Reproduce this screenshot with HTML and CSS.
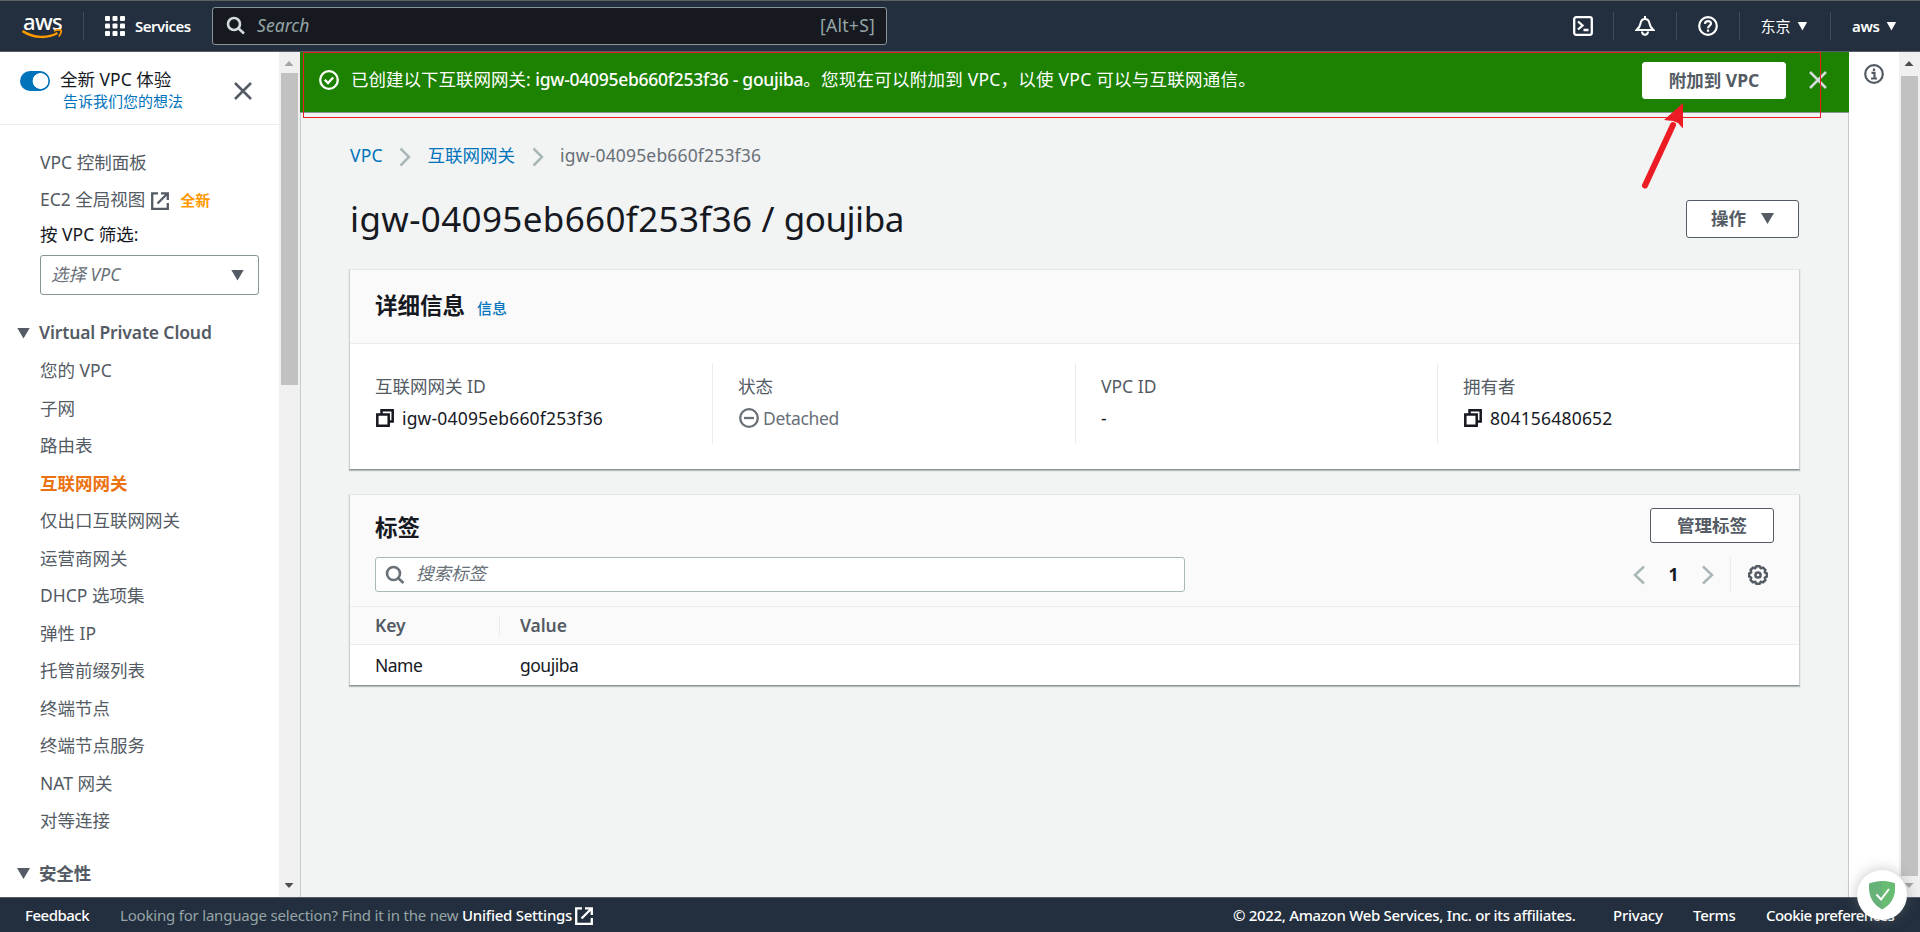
FILE: index.html
```html
<!DOCTYPE html>
<html lang="zh-CN">
<head>
<meta charset="utf-8">
<title>VPC 管理控制台</title>
<link rel="stylesheet" href="styles.css">
</head>
<body>
<header class="topnav">
  <div class="logo"><span>aws</span><svg width="42" height="10" viewBox="0 0 42 10" fill="none" stroke="#ff9900"><path d="M.5 2C12 9.500 26 9.500 35.500 4" stroke-width="2.500"/><path d="M32 1.800C35 .7 38.500 .5 39 1.300C39.500 3 38.500 5.500 36.800 7.500" stroke-width="1.800"/></svg></div>
  <i class="sep sep-logo"></i>
  <a class="services">
    <svg width="20" height="20" viewBox="0 0 20 20" fill="#fff"><rect width="5" height="5" rx="1"/><rect x="7.500" width="5" height="5" rx="1"/><rect x="15" width="5" height="5" rx="1"/><rect y="7.500" width="5" height="5" rx="1"/><rect x="7.500" y="7.500" width="5" height="5" rx="1"/><rect x="15" y="7.500" width="5" height="5" rx="1"/><rect y="15" width="5" height="5" rx="1"/><rect x="7.500" y="15" width="5" height="5" rx="1"/><rect x="15" y="15" width="5" height="5" rx="1"/></svg>
    <span>Services</span>
  </a>
  <div class="topsearch">
    <svg width="20" height="20" viewBox="0 0 20 20" fill="none" stroke="#d5dbdb" stroke-width="2.600"><circle cx="8" cy="8" r="6"/><path d="M12.300 12.300L18 17.500"/></svg>
    <span class="ph">Search</span><span class="key">[Alt+S]</span>
  </div>
  <nav class="tools">
    <svg width="20" height="20" viewBox="0 0 20 20" fill="none" stroke="#fff" stroke-width="2.300"><rect x="1.200" y="1.200" width="17.600" height="17.600" rx="2"/><path d="M5 5.500L9.500 9.500L5 13.500M10.500 14H15.500"/></svg>
    <i class="sep"></i>
    <svg width="20" height="20" viewBox="0 0 20 20" fill="none" stroke="#fff" stroke-width="2"><path d="M1.500 14H18.500C16 12 15 11 14.500 7.500C14 4.500 12.500 3 10 3S6 4.500 5.500 7.500C5 11 4 12 1.500 14ZM10 0V3M7 15.500C7 19.700 13 19.700 13 15.500"/></svg>
    <i class="sep"></i>
    <svg width="20" height="20" viewBox="0 0 20 20" fill="none" stroke="#fff" stroke-width="2.200"><circle cx="10" cy="10" r="8.800"/><path d="M6.900 7.800C7.200 4.200 13 4.300 13 7.600C13 9.800 10 9.500 10 12.300M10 13.500V15.800"/></svg>
    <i class="sep"></i>
    <a class="menu region">东京<b class="tri"></b></a>
    <i class="sep"></i>
    <a class="menu account"><span>aws</span><b class="tri"></b></a>
  </nav>
</header>

<div class="body">
  <aside class="side">
    <div class="side-head">
      <b class="toggle"></b>
      <div class="trial"><span>全新 VPC 体验</span><a>告诉我们您的想法</a></div>
      <svg class="side-close" width="18" height="18" viewBox="0 0 18 18" stroke="#545b64" stroke-width="2.500"><path d="M1 1L17 17M17 1L1 17"/></svg>
    </div>
    <div class="side-top">
      <a>VPC 控制面板</a>
      <a class="ec2">EC2 全局视图<svg width="18" height="18" viewBox="0 0 18 18" fill="none" stroke="#545b64" stroke-width="2.300"><path d="M7 1.300H1.200V16.800H16.800V11M10 1.300H16.800V8M16.500 1.500L6.500 11.500"/></svg><em>全新</em></a>
      <label>按 VPC 筛选:</label>
      <div class="select"><span>选择 VPC</span><b class="tri big"></b></div>
    </div>
    <h3><b class="tri big"></b>Virtual Private Cloud</h3>
    <ul>
      <li>您的 VPC</li><li>子网</li><li>路由表</li><li class="on">互联网网关</li><li>仅出口互联网网关</li><li>运营商网关</li><li>DHCP 选项集</li><li>弹性 IP</li><li>托管前缀列表</li><li>终端节点</li><li>终端节点服务</li><li>NAT 网关</li><li>对等连接</li>
    </ul>
    <h3 class="sec"><b class="tri big"></b>安全性</h3>
  </aside>
  <div class="bar bar-left"><i class="up"></i><div class="thumb"></div><i class="down dark"></i></div>

  <main>
    <div class="flash">
      <svg width="20" height="20" viewBox="0 0 20 20" fill="none" stroke="#fff" stroke-width="2.300"><circle cx="10" cy="10" r="8.800"/><path d="M5.800 9.800L9 13L14.200 7.500"/></svg>
      <p>已创建以下互联网网关: <span class="gw">igw-04095eb660f253f36 - goujiba</span><span class="rest">。您现在可以附加到 VPC，以使 VPC 可以与互联网通信。</span></p>
      <button class="btn attach">附加到 VPC</button>
      <svg class="flash-close" width="18" height="18" viewBox="0 0 18 18" stroke="#d5dbdb" stroke-width="2.500"><path d="M1 1L17 17M17 1L1 17"/></svg>
    </div>
    <div class="content">
      <div class="crumbs">
        <a>VPC</a>
        <svg width="12" height="20" viewBox="0 0 12 20" fill="none" stroke="#aab7b8" stroke-width="2.500"><path d="M1.500 1.500L10 10L1.500 18.500"/></svg>
        <a>互联网网关</a>
        <svg width="12" height="20" viewBox="0 0 12 20" fill="none" stroke="#aab7b8" stroke-width="2.500"><path d="M1.500 1.500L10 10L1.500 18.500"/></svg>
        <span class="id">igw-04095eb660f253f36</span>
      </div>
      <div class="title-row">
        <h1><span class="h-id">igw-04095eb660f253f36</span> / <span class="h-name">goujiba</span></h1>
        <button class="btn actions">操作<b class="tri big"></b></button>
      </div>

      <section class="card">
        <div class="card-head"><h2>详细信息</h2><a>信息</a></div>
        <div class="cols">
          <div class="col"><span>互联网网关 ID</span><p><svg width="18" height="18" viewBox="0 0 18 18" fill="none" stroke="#16191f" stroke-width="2.500"><path d="M1.300 5.500H12.700V16.700H1.300ZM5.500 5V1.300H16.700V12.500H13"/></svg><b class="id">igw-04095eb660f253f36</b></p></div>
          <div class="col"><span>状态</span><p class="muted"><svg width="20" height="20" viewBox="0 0 20 20" fill="none" stroke="#687078" stroke-width="2.300"><circle cx="10" cy="10" r="8.800"/><path d="M5 10H15"/></svg><b class="state">Detached</b></p></div>
          <div class="col"><span>VPC ID</span><p>-</p></div>
          <div class="col"><span>拥有者</span><p><svg width="18" height="18" viewBox="0 0 18 18" fill="none" stroke="#16191f" stroke-width="2.500"><path d="M1.300 5.500H12.700V16.700H1.300ZM5.500 5V1.300H16.700V12.500H13"/></svg><b class="owner">804156480652</b></p></div>
        </div>
      </section>

      <section class="card tags">
        <div class="tags-head">
          <div class="row"><h2>标签</h2><button class="btn manage">管理标签</button></div>
          <div class="row filter">
            <div class="tagsearch"><svg width="20" height="20" viewBox="0 0 20 20" fill="none" stroke="#687078" stroke-width="2.600"><circle cx="8.500" cy="8.500" r="6.500"/><path d="M13 13L18.500 18"/></svg><span>搜索标签</span></div>
            <div class="pager">
              <svg width="12" height="20" viewBox="0 0 12 20" fill="none" stroke="#aab7b8" stroke-width="2.500"><path d="M11 1.500L2 10L11 18.500"/></svg>
              <strong>1</strong>
              <svg width="12" height="20" viewBox="0 0 12 20" fill="none" stroke="#aab7b8" stroke-width="2.500"><path d="M1 1.500L10 10L1 18.500"/></svg>
              <i></i>
              <svg width="20" height="20" viewBox="0 0 20 20" fill="none" stroke="#545b64" stroke-width="2.500" stroke-linejoin="round"><path d="M8.300 1.200H11.700L12.700 3.200L15 2.600L17.400 5L16.800 7.300L18.800 8.300V11.700L16.800 12.700L17.400 15L15 17.400L12.700 16.800L11.700 18.800H8.300L7.300 16.800L5 17.400L2.600 15L3.200 12.700L1.200 11.700V8.300L3.200 7.300L2.600 5L5 2.600L7.300 3.200Z"/><circle cx="10" cy="10" r="2.600"/></svg>
            </div>
          </div>
        </div>
        <div class="tr th"><span class="k">Key</span><span>Value</span></div>
        <div class="tr td"><span class="k">Name</span><span>goujiba</span></div>
      </section>
    </div>
  </main>

  <aside class="info"><svg width="20" height="20" viewBox="0 0 20 20" fill="none" stroke="#545b64" stroke-width="2.200"><circle cx="10" cy="10" r="8.800"/><path d="M10 4.500V7M7.500 8.800H10.500V14M7 14.500H13"/></svg></aside>
  <div class="bar bar-right"><i class="up dark"></i><div class="thumb"></div><i class="down"></i></div>
</div>

<footer>
  <a class="fb">Feedback</a>
  <span class="lang">Looking for language selection? Find it in the new</span>
  <a class="us">Unified Settings</a>
  <svg width="18" height="18" viewBox="0 0 18 18" fill="none" stroke="#fff" stroke-width="2.300"><path d="M7 1.300H1.200V16.800H16.800V11M10 1.300H16.800V8M16.500 1.500L6.500 11.500"/></svg>
  <span class="copy">© 2022, Amazon Web Services, Inc. or its affiliates.</span>
  <a class="pr">Privacy</a><a class="te">Terms</a><a class="co">Cookie preferences</a>
</footer>

<div class="marker"></div>
<svg class="arrow" width="50" height="92" viewBox="0 0 50 92"><path d="M5 84.500L33 24" stroke="#ed1c24" stroke-width="6" stroke-linecap="round"/><path d="M43 2L24 19L33 20L38 22L43 27.500Z" fill="#ed1c24"/></svg>
<div class="shield"><svg width="26" height="29" viewBox="0 0 26 29"><path d="M13 0C17 0 22 1 26 2.500C26.500 14 24 22 13 28.500C2 22-.5 14 0 2.500C4 1 9 0 13 0Z" fill="#67b279"/><path d="M13 0C17 0 22 1 26 2.500C26.500 14 24 22 13 28.500Z" fill="#68bc71"/><path d="M7.500 13.500L12 18.500L20 8" fill="none" stroke="#fff" stroke-width="2"/></svg></div>
</body>
</html>
```
FILE: styles.css
```css
* { box-sizing: border-box; }
body {
  margin: 0; width: 1920px; height: 932px; overflow: hidden; position: relative;
  display: flex; flex-direction: column;
  font: 17.5px/27.5px "Noto Sans", "Noto Sans CJK SC", sans-serif;
  color: #16191f; background: #f2f3f3; white-space: nowrap;
}
svg { display: block; flex: none; }
h1, h2, h3, p, ul { margin: 0; padding: 0; }
b { font-weight: 400; }
.tri { display: block; flex: none; width: 10px; height: 9px; background: currentColor; clip-path: polygon(0 0, 100% 0, 50% 100%); }
.tri.big { width: 13px; height: 11px; background: #545b64; }

/* top bar */
.topnav { height: 52px; flex: none; display: flex; align-items: center; background: #232f3e; border-top: 1px solid #5d625f; border-bottom: 1px solid #545e69; color: #fff; font-size: 15px; padding-left: 22px; }
.logo { width: 42px; height: 40px; display: flex; flex-direction: column; }
.logo span { font-size: 22px; line-height: 30px; height: 23px; font-weight: 500; letter-spacing: -.7px; padding-left: 1px; }
.sep { width: 1px; height: 28px; background: #414c5a; flex: none; }
.sep-logo { margin: 0 21px 0 19px; }
.services { display: flex; align-items: center; gap: 10px; width: 107px; font-weight: 600; letter-spacing: -.5px; }
.services span { padding-top: 2px; }
.topsearch { width: 675px; height: 38px; border: 1px solid #879596; border-radius: 3px; background: #161920; display: flex; align-items: center; padding: 0 11px 0 13px; color: #95a5a6; font-size: 17.5px; }
.ph { font-style: italic; margin-left: 11px; flex: 1; letter-spacing: .05px; }
.key { letter-spacing: .25px; }
.tools { margin-left: auto; display: flex; align-items: center; gap: 20.800px; padding-right: 24px; }
.menu { display: flex; align-items: center; gap: 8px; font-weight: 600; padding-top: 2px; }
.menu .tri { margin-top: -2px; }
.region { font-weight: 400; width: 49px; gap: 7px; }
.account { width: 44px; letter-spacing: -.4px; gap: 7px; }

.body { height: 845px; flex: none; display: flex; }

/* side navigation */
.side { width: 279px; background: #fff; color: #545b64; overflow: hidden; }
.side-head { height: 73px; border-bottom: 1px solid #eaeded; display: flex; padding: 15px 0 0 20px; color: #16191f; }
.toggle { width: 30px; height: 20px; margin-top: 4px; border-radius: 10px; background: radial-gradient(circle at 20.500px 10px, #fff 7.500px, #0073bb 8.200px); }
.trial { width: 174px; margin-left: 10px; display: flex; flex-direction: column; line-height: 25px; }
.trial a { font-size: 15px; color: #0073bb; line-height: 18px; padding-left: 3px; }
.side-close { margin-top: 15px; }
.side-top { display: flex; flex-direction: column; padding: 23px 20px 0 40px; }
.side-top a { line-height: 28px; height: 37px; }
.ec2 { display: flex; }
.ec2 svg { margin: 7px 11px 0 6px; }
.ec2 em { font: 700 15px/30px "Noto Sans CJK SC", sans-serif; color: #ff9900; }
.side-top label { color: #16191f; line-height: 27px; margin-bottom: 10px; height: 24px; margin-top: -1px; }
.select { width: 219px; height: 40px; border: 1px solid #879596; border-radius: 3px; display: flex; align-items: center; justify-content: space-between; padding: 0 14px 0 10px; font-style: italic; color: #687078; }
.side h3 { display: flex; align-items: center; gap: 9px; padding-left: 17px; font-size: 17.500px; font-weight: 600; height: 30px; margin-top: 23px; letter-spacing: -.14px; }
.side ul { list-style: none; padding: 4px 0 0 40px; }
.side li { height: 37.500px; line-height: 37.500px; }
.side li.on { color: #ec7211; font-weight: 700; }
.side .sec { margin-top: 19px; }

/* scrollbars */
.bar { width: 21px; background: #f0f0f0; display: flex; flex-direction: column; align-items: center; padding-right: 1px; }
.bar .up, .bar .down { width: 9px; height: 5px; background: #a3a3a3; flex: none; }
.bar .up { clip-path: polygon(50% 0, 100% 100%, 0 100%); margin-top: 9px; }
.bar .down { clip-path: polygon(0 0, 100% 0, 50% 100%); margin: auto 0 9px; }
.bar .dark { background: #4d4d4d; }
.thumb { width: 17px; background: #c1c1c1; }
.bar-left .thumb { height: 312px; margin-top: 7px; }
.bar-right .thumb { height: 800px; margin-top: 10px; }

/* main */
main { width: 1549px; border: solid #c5cacc; border-width: 0 1px; }
.flash { height: 61px; margin: 0 -1px; background: #1d8102; border-bottom: 1px solid #879596; color: #fff; display: flex; padding: 10px 22px 0 19px; }
.flash > svg:first-child { margin: 8px 12px 0 0; }
.flash p { line-height: 35px; flex: 1; }
.flash .gw { font-weight: 500; letter-spacing: -.27px; }
.flash .rest { letter-spacing: .24px; }
.btn { border: 1px solid #545b64; border-radius: 3px; background: #fff; color: #545b64; font: 700 17.500px "Noto Sans", "Noto Sans CJK SC", sans-serif; padding: 0 0 3px; display: flex; align-items: center; justify-content: center; }
.attach { width: 144px; height: 37px; border-color: #fff; margin-right: -1px; }
.flash-close { margin: 9px 0 0 24px; }
.content { padding: 29px 48px 0 48px; }
.crumbs { display: flex; align-items: center; height: 28px; gap: 16.500px; color: #687078; padding-left: 1px; }
.crumbs svg { margin-top: 2px; }
.crumbs a { color: #0073bb; }
.crumbs a:first-child { letter-spacing: .15px; }
.id { letter-spacing: .17px; }
.owner { letter-spacing: .2px; }
.state { letter-spacing: -.35px; }
.title-row { display: flex; justify-content: space-between; margin-top: 29px; height: 70px; }
h1 { font-weight: 400; font-size: 35px; line-height: 39px; padding-left: 1px; }
.h-id { letter-spacing: .36px; }
.h-name { letter-spacing: -.5px; }
.actions { width: 113px; height: 38px; gap: 15px; margin: 1px 1px 0 0; }
.actions .tri { margin-top: 2px; }
.card { background: #fff; height: 201px; border: 1px solid #e3e7e7; border-left-color: #ccd1d2; border-right-color: #ccd1d2; border-bottom-color: #879596; box-shadow: 0 1px 1px rgba(0,28,36,.25); margin-bottom: 24px; }
.card-head { height: 74px; background: #fafafa; border-bottom: 1px solid #eaeded; display: flex; align-items: baseline; padding: 21px 25px 0; gap: 12px; }
h2 { font-size: 22.500px; line-height: 30px; font-weight: 700; }
.card-head a { color: #0073bb; font-size: 15px; font-weight: 500; }
.cols { display: grid; grid-template-columns: 363px 363px 362px 1fr; padding-top: 19px; }
.col { height: 81px; padding: 10px 0 0 25px; border-right: 1px solid #eaeded; color: #545b64; }
.col:last-child { border: 0; }
.col p { color: #16191f; display: flex; align-items: center; gap: 8px; margin-top: 4px; }
.col p svg { margin-left: 1px; }
.col .muted { color: #687078; gap: 4px; }
.tags { height: 192px; }
.tags-head { height: 112px; background: #fafafa; border-bottom: 1px solid #eaeded; padding: 13px 25px 0; }
.row { display: flex; justify-content: space-between; }
.row h2 { line-height: 39px; }
.manage { width: 124px; height: 35px; margin-bottom: 1px; }
.filter { margin-top: 10px; }
.tagsearch { width: 810px; height: 35px; border: 1px solid #aab7b8; border-radius: 3px; background: #fff; display: flex; align-items: center; padding: 0 0 2px 9px; gap: 11px; font-style: italic; color: #687078; }
.tagsearch svg { margin-top: 2px; }
.pager { display: flex; align-items: center; padding-right: 6px; height: 35px; }
.pager strong { width: 57px; text-align: center; }
.pager i { width: 1px; height: 35px; background: #eaeded; margin: 0 17px 0 16px; }
.tr { display: flex; padding-left: 25px; line-height: 40px; }
.tr .k { width: 145px; }
.td { letter-spacing: -.5px; }
.th { height: 38px; background: linear-gradient(#eaeded, #eaeded) 149px 9px / 1px 20px no-repeat #fafafa; border-bottom: 1px solid #eaeded; color: #545b64; font-weight: 600; line-height: 36px; letter-spacing: -.1px; }

.info { width: 50px; background: #fff; padding: 12px 0 0 15px; }

/* footer */
footer { height: 35px; background: #232f3e; border-top: 1px solid #545e69; display: flex; align-items: center; color: #fff; font-size: 15px; font-weight: 500; padding: 2px 0 0 25px; }
.fb { width: 95px; letter-spacing: -.5px; }
.lang { width: 342px; color: #95a5a6; font-weight: 400; letter-spacing: -.2px; }
.us { width: 113px; letter-spacing: -.25px; }
.copy { margin-left: auto; width: 380px; letter-spacing: -.32px; }
.pr { width: 80px; letter-spacing: -.25px; }
.te { width: 73px; letter-spacing: -.25px; }
.co { width: 154px; letter-spacing: -.54px; }

/* overlays */
.marker { position: absolute; left: 303px; top: 52px; width: 1518px; height: 66px; border: 1px solid #ed1c24; }
.arrow { position: absolute; left: 1640px; top: 101px; }
.shield { position: absolute; left: 1857px; top: 870px; width: 50px; height: 50px; border-radius: 50%; background: #fff; box-shadow: 0 0 14px rgba(120,120,120,.45); display: flex; align-items: center; justify-content: center; }
```
